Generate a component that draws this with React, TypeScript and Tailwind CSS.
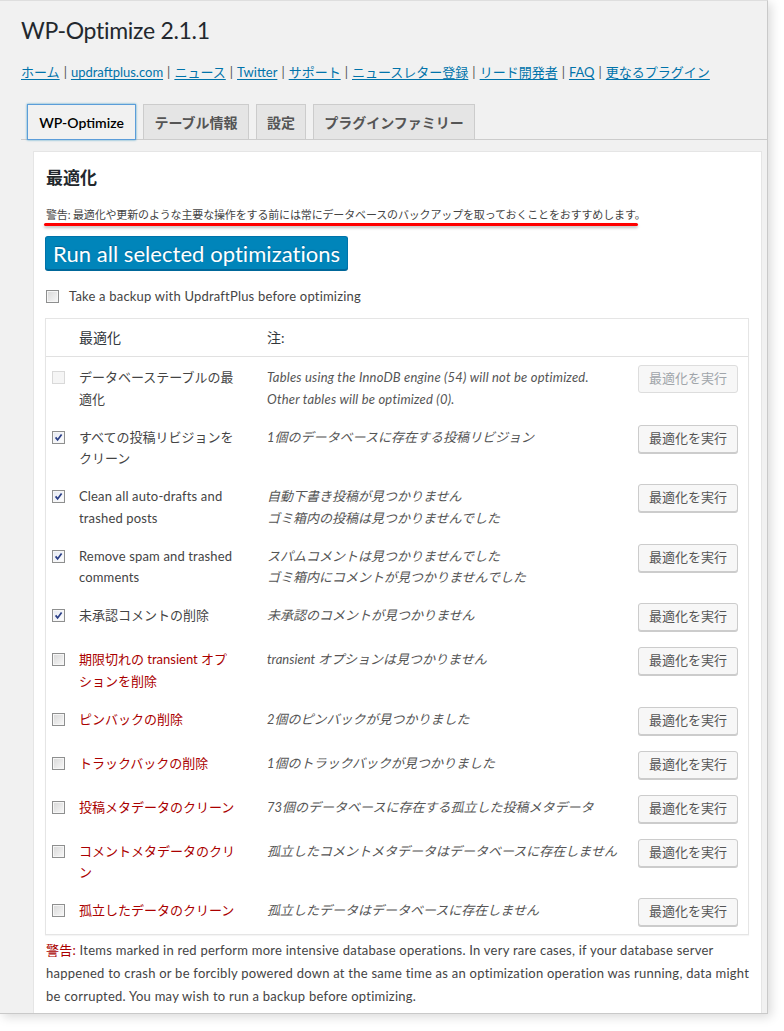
import React from 'react'

type Row = {
  label: string
  note: string[]
  checked?: boolean
  red?: boolean
  disabled?: boolean
}

const rows: Row[] = [
  {
    label: 'データベーステーブルの最適化',
    note: [
      'Tables using the InnoDB engine (54) will not be optimized.',
      'Other tables will be optimized (0).',
    ],
    disabled: true,
  },
  { label: 'すべての投稿リビジョンをクリーン', note: ['1個のデータベースに存在する投稿リビジョン'], checked: true },
  {
    label: 'Clean all auto-drafts and trashed posts',
    note: ['自動下書き投稿が見つかりません', 'ゴミ箱内の投稿は見つかりませんでした'],
    checked: true,
  },
  {
    label: 'Remove spam and trashed comments',
    note: ['スパムコメントは見つかりませんでした', 'ゴミ箱内にコメントが見つかりませんでした'],
    checked: true,
  },
  { label: '未承認コメントの削除', note: ['未承認のコメントが見つかりません'], checked: true },
  { label: '期限切れの transient オプションを削除', note: ['transient オプションは見つかりません'], red: true },
  { label: 'ピンバックの削除', note: ['2個のピンバックが見つかりました'], red: true },
  { label: 'トラックバックの削除', note: ['1個のトラックバックが見つかりました'], red: true },
  { label: '投稿メタデータのクリーン', note: ['73個のデータベースに存在する孤立した投稿メタデータ'], red: true },
  { label: 'コメントメタデータのクリン', note: ['孤立したコメントメタデータはデータベースに存在しません'], red: true },
  { label: '孤立したデータのクリーン', note: ['孤立したデータはデータベースに存在しません'], red: true },
]

const links = [
  'ホーム',
  'updraftplus.com',
  'ニュース',
  'Twitter',
  'サポート',
  'ニュースレター登録',
  'リード開発者',
  'FAQ',
  '更なるプラグイン',
]

const isLatin = (s: string) => /^[\x00-\x7f]+$/.test(s)

const Checkbox = ({ checked, disabled }: { checked?: boolean; disabled?: boolean }) => {
  if (disabled) {
    return <span className="block w-[13px] h-[13px] border border-[#d9d9d9] bg-[#f5f5f5]" />
  }
  return (
    <span
      className={`relative block w-[13px] h-[13px] border border-[#8e8f8f] shadow-[inset_0_0_0_1px_#f6f6f6] ${
        checked ? 'bg-linear-to-br from-[#e4e8f2] to-[#ffffff]' : 'bg-linear-to-br from-[#d8d8d8] to-[#f8f8f8]'
      }`}
    >
      {checked && (
        <svg viewBox="0 0 11 11" className="absolute left-0 top-0 w-[11px] h-[11px]">
          <path d="M2.6 5.4 L4.6 7.9 L8.6 2.4" fill="none" stroke="#2b3f86" strokeWidth="1.7" />
        </svg>
      )}
    </span>
  )
}

const App = () => {
  return (
    <div className="font-[Lato,'Noto_Sans_CJK_JP',sans-serif] bg-white w-[784px] h-[1031px]">
      <div className="flex flex-col w-[768px] h-[1014px] overflow-hidden bg-[#f1f1f1] border-t border-r border-b border-t-[#dedede] border-r-[#c9c9c9] border-b-[#c9c9c9] shadow-[3px_3px_10px_rgba(0,0,0,0.15)] pl-[21px] pt-[15px]">
        {/* Title */}
        <h1 className="text-[23px] leading-[29px] tracking-[-0.3px] text-[#23282d]">WP-Optimize 2.1.1</h1>

        {/* Links */}
        <div className="mt-[17px] text-[13px] leading-[20px] text-[#555]">
          {links.map((l, i) => (
            <React.Fragment key={l}>
              {i > 0 && <span className="px-[0.7px]"> | </span>}
              <a href="#" className="text-[#0073aa] underline underline-offset-2">
                {l}
              </a>
            </React.Fragment>
          ))}
        </div>

        {/* Tabs */}
        <div className="mt-[22px] flex items-end gap-[7px] pl-[6px] border-b border-[#ccc]">
          <div className="-mb-px w-[109px] h-[36px] flex items-center justify-center border border-[#5b9dd9] shadow-[0_0_2px_rgba(30,140,190,0.8)] bg-[#f1f1f1] text-[14px] font-semibold text-black">
            WP-Optimize
          </div>
          <div className="-mb-px w-[106px] h-[36px] flex items-center justify-center border border-[#ccc] bg-[#e5e5e5] text-[14px] font-semibold text-[#555]">
            テーブル情報
          </div>
          <div className="-mb-px w-[50px] h-[36px] flex items-center justify-center border border-[#ccc] bg-[#e5e5e5] text-[14px] font-semibold text-[#555]">
            設定
          </div>
          <div className="-mb-px w-[162px] h-[36px] flex items-center justify-center border border-[#ccc] bg-[#e5e5e5] text-[14px] font-semibold text-[#555]">
            プラグインファミリー
          </div>
        </div>

        {/* Content box */}
        <div className="flex-1 mt-[11px] ml-[12px] mr-[5px] bg-white border border-b-0 border-[#e5e5e5] px-[12px] pt-[15px]">
          <h2 className="text-[17px] leading-[22px] font-bold text-[#23282d]">最適化</h2>

          <p className="mt-[18px] text-[11px] leading-[16px] tracking-[-0.15px] text-[#444]">
            警告: 最適化や更新のような主要な操作をする前には常にデータベースのバックアップを取っておくことをおすすめします。
          </p>
          <div className="-ml-[2px] w-[594px] h-[3px] rounded-full bg-[#ff0000] shadow-[0_2px_3px_rgba(0,0,0,0.25)]" />

          <div className="mt-[10px] -ml-px inline-flex h-[34px] items-center px-[7px] rounded-[3px] bg-[#0085ba] border border-[#0073aa] border-b-[#006799] shadow-[0_1px_0_#006799] text-[22px] tracking-[0.05px] text-white [text-shadow:0_-1px_1px_#006799]">
            Run all selected optimizations
          </div>

          <label className="mt-[20px] flex items-center gap-[10px] h-[13px] text-[13px] text-[#444]">
            <Checkbox />
            <span className="tracking-[0.2px]">Take a backup with UpdraftPlus before optimizing</span>
          </label>

          {/* Table */}
          <div className="mt-[15px] -ml-px border border-[#e5e5e5] shadow-[0_1px_1px_rgba(0,0,0,0.04)]">
            <div className="grid grid-cols-[33px_188px_1fr_100px] pr-[10px] py-[8px] border-b border-[#e1e1e1] text-[14px] leading-[21px] text-[#32373c]">
              <div />
              <div>最適化</div>
              <div>注:</div>
              <div />
            </div>
            {rows.map((r) => (
              <div key={r.label} className="grid grid-cols-[33px_188px_1fr_100px] items-start pr-[10px] py-[8px]">
                <div className="pl-[6px] pt-[6px]">
                  <Checkbox checked={r.checked} disabled={r.disabled} />
                </div>
                <div
                  className={`mt-[2px] -mb-[2px] w-[160px] text-[13px] leading-[21.75px] ${
                    r.red ? 'text-[#a00]' : 'text-[#444]'
                  } ${isLatin(r.label) ? 'tracking-[0.15px]' : ''}`}
                >
                  {r.label}
                </div>
                <div className="mt-[2px] -mb-[2px] text-[13px] leading-[21.75px] italic text-[#555]">
                  {r.note.map((n) => (
                    <div key={n} className={`whitespace-nowrap ${isLatin(n) ? 'tracking-[0.2px]' : ''}`}>
                      {n}
                    </div>
                  ))}
                </div>
                <div
                  className={`h-[28px] w-[100px] flex items-center justify-center rounded-[3px] border text-[13px] bg-[#f7f7f7] ${
                    r.disabled
                      ? 'border-[#ddd] text-[#a0a5aa]'
                      : 'border-[#ccc] text-[#555] shadow-[0_1px_0_#ccc]'
                  }`}
                >
                  最適化を実行
                </div>
              </div>
            ))}
          </div>

          <div className="mt-[4px] text-[13px] leading-[23px] tracking-[0.25px] text-[#444]">
            <div className="whitespace-nowrap">
              <span className="text-[#a00]">警告:</span> Items marked in red perform more intensive database
              operations. In very rare cases, if your database server
            </div>
            <div className="whitespace-nowrap">
              happened to crash or be forcibly powered down at the same time as an optimization operation was running,
              data might
            </div>
            <div className="whitespace-nowrap">be corrupted. You may wish to run a backup before optimizing.</div>
          </div>
        </div>
      </div>
    </div>
  )
}

export default App
